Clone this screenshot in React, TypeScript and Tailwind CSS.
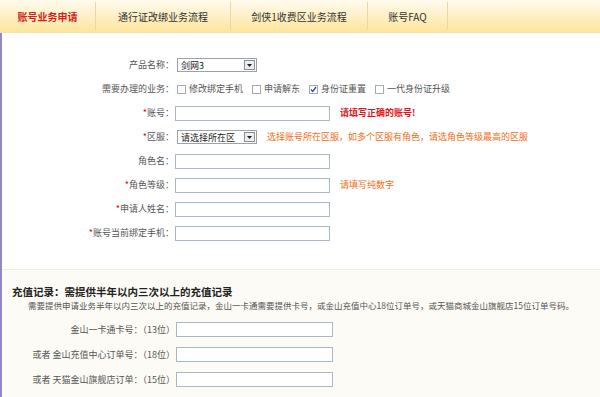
import React from "react";

const font = { fontFamily: '"Noto Sans CJK SC", "Noto Sans", sans-serif' };

function Select({ value }: { value: string }) {
  return (
    <div className="flex h-[14px] w-[80px] items-center border border-[#9aa3ad] bg-white">
      <span className="flex-1 pl-[3px] text-[9px] leading-none text-[#222]">{value}</span>
      <span className="mr-[1px] flex h-[10px] w-[11px] items-center justify-center border border-[#8a8f96] bg-[#eceef1]">
        <svg width="5" height="3" viewBox="0 0 5 3">
          <path d="M0 0 L5 0 L2.5 3 Z" fill="#222" />
        </svg>
      </span>
    </div>
  );
}

function Check({ checked, label }: { checked?: boolean; label: string }) {
  return (
    <span className="flex items-center gap-[3px]">
      <span className="relative flex h-[9px] w-[9px] items-center justify-center border border-[#a5abb3] bg-white">
        {checked && (
          <svg width="7" height="7" viewBox="0 0 7 7" className="absolute">
            <path d="M1 3.5 L2.8 5.5 L6 1" fill="none" stroke="#2a4db0" strokeWidth="1.3" />
          </svg>
        )}
      </span>
      <span>{label}</span>
    </span>
  );
}

function Input({ w = "w-[155px]" }: { w?: string }) {
  return <div className={`h-[15px] ${w} border border-[#a9b8c8] bg-white`} />;
}

function Row({
  label,
  req,
  children,
}: {
  label: string;
  req?: boolean;
  children: React.ReactNode;
}) {
  return (
    <div className="flex h-[24px] items-center">
      <div className="w-[173px] shrink-0 pr-[1px] text-right text-[9px] text-[#555]">
        {req && <span className="text-[#e60000]">*</span>}
        {label}：
      </div>
      <div className="flex items-center">{children}</div>
    </div>
  );
}

export default function App() {
  return (
    <div className="h-[397px] w-[600px] overflow-hidden bg-white" style={font}>
      {/* header tabs */}
      <div className="flex h-[33px] items-stretch border-b border-[#f4e2b0] bg-gradient-to-b from-[#fffbee] to-[#fde59b] text-[10px]">
        <div className="flex w-[95px] items-center justify-center font-bold text-[#d81e1e]">账号业务申请</div>
        <div className="my-[2px] w-[1px] bg-[#ead7a4]" />
        <div className="flex w-[134px] items-center justify-center text-[#333]">通行证改绑业务流程</div>
        <div className="my-[2px] w-[1px] bg-[#ead7a4]" />
        <div className="flex w-[136px] items-center justify-center text-[#333]">剑侠1收费区业务流程</div>
        <div className="my-[2px] w-[1px] bg-[#ead7a4]" />
        <div className="flex w-[79px] items-center justify-center text-[#333]">账号FAQ</div>
        <div className="my-[2px] w-[1px] bg-[#ead7a4]" />
        <div className="flex-1" />
      </div>

      <div className="border-l-2 border-[#8f89c4]">
        {/* form */}
        <div className="h-[236px] pt-[20px]">
          <Row label="产品名称">
            <div className="ml-[2px]">
              <Select value="剑网3" />
            </div>
          </Row>
          <Row label="需要办理的业务">
            <div className="ml-[2px] flex items-center gap-[9px] text-[9px] text-[#555]">
              <Check label="修改绑定手机" />
              <Check label="申请解东" />
              <Check checked label="身份证重置" />
              <Check label="一代身份证升级" />
            </div>
          </Row>
          <Row label="账号" req>
            <Input />
            <span className="ml-[10px] text-[9px] font-bold text-[#e3141b]">请填写正确的账号!</span>
          </Row>
          <Row label="区服" req>
            <div className="ml-[2px]">
              <Select value="请选择所在区" />
            </div>
            <span className="ml-[10px] text-[9px] text-[#f26d14]">
              选择账号所在区服，如多个区服有角色，请选角色等级最高的区服
            </span>
          </Row>
          <Row label="角色名">
            <Input />
          </Row>
          <Row label="角色等级" req>
            <Input />
            <span className="ml-[10px] text-[9px] text-[#f26d14]">请填写纯数字</span>
          </Row>
          <Row label="申请人姓名" req>
            <Input />
          </Row>
          <Row label="账号当前绑定手机" req>
            <Input />
          </Row>
        </div>

        {/* recharge section */}
        <div className="h-[128px] border-t border-[#efece2] bg-[#fcfbf6]">
          <div className="pl-[10px] pt-[15px] text-[10.5px] font-bold leading-[14px] text-[#222]">
            充值记录：需提供半年以内三次以上的充值记录
          </div>
          <div className="pl-[26px] text-[8.5px] leading-[12px] text-[#555]">
            需要提供申请业务半年以内三次以上的充值记录，金山一卡通需要提供卡号，或金山充值中心18位订单号，或天猫商城金山旗舰店15位订单号码。
          </div>
          <div className="pt-[6px]">
            {[
              "金山一卡通卡号：（13位）",
              "或者 金山充值中心订单号：（18位）",
              "或者 天猫金山旗舰店订单：（15位）",
            ].map((t) => (
              <div key={t} className="flex h-[25px] items-center">
                <div className="w-[173px] shrink-0 text-right text-[9px] text-[#555]">{t}</div>
                <div className="ml-[1px]">
                  <Input w="w-[157px]" />
                </div>
              </div>
            ))}
          </div>
        </div>
      </div>
    </div>
  );
}
